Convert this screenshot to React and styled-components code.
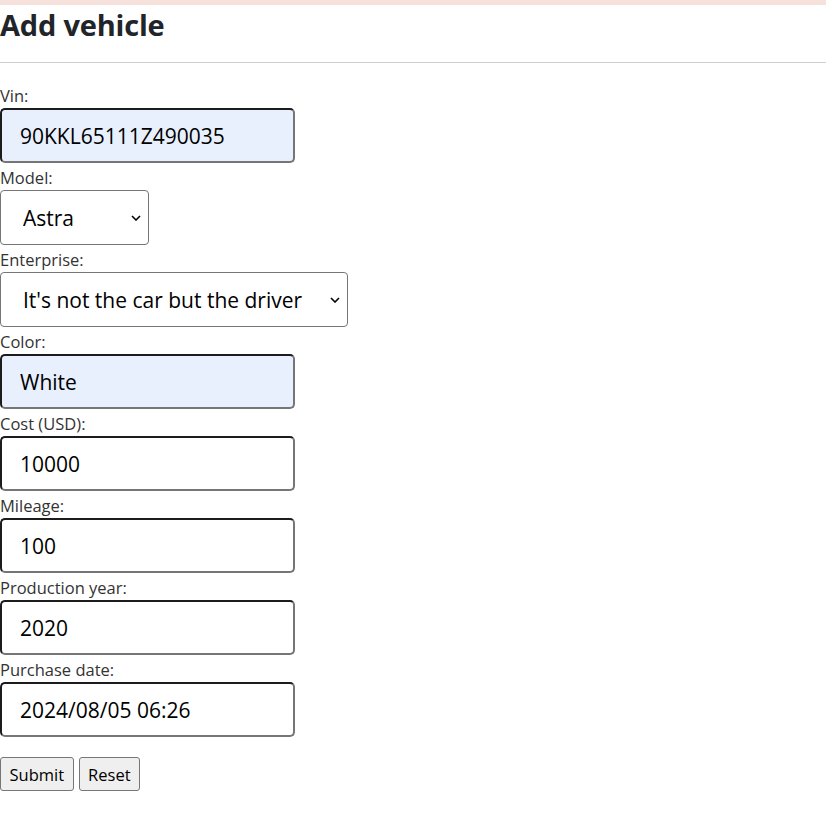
import React from 'react'
import styled, { createGlobalStyle } from 'styled-components'

const GlobalStyle = createGlobalStyle`
  body {
    margin: 0;
    background: #ffffff;
    font-family: "Open Sans", "Noto Sans", sans-serif;
    color: #212529;
  }
`

const TopStrip = styled.div`
  height: 5px;
  background: #f6e1db;
`

const Heading = styled.h1`
  margin: 0;
  height: 52px;
  font-size: 29px;
  font-weight: 700;
  line-height: 40px;
  color: #212529;
  letter-spacing: -0.2px;
`

const Rule = styled.hr`
  margin: 5px 0 18px;
  border: 0;
  border-top: 1px solid #cfcfcf;
`

const Form = styled.form`
  display: flex;
  flex-direction: column;
`

const Field = styled.div`
  display: flex;
  flex-direction: column;
  align-items: flex-start;
`

const Label = styled.label`
  font-size: 16.5px;
  line-height: 24px;
  padding-top: 3px;
  color: #333;
`

const TextInput = styled.input`
  box-sizing: border-box;
  width: 295px;
  height: 55px;
  padding: 0 0 0 18px;
  border: 2px solid;
  border-color: #1c1c1c #767676 #767676 #1c1c1c;
  border-radius: 5px;
  background: ${p => (p.$filled ? '#e8f0fe' : '#ffffff')};
  font-family: "Open Sans", "Noto Sans", sans-serif;
  font-size: 21px;
  color: #000;
  outline: none;
`

const Select = styled.select`
  box-sizing: border-box;
  width: ${p => p.$width}px;
  height: 55px;
  padding: 0 30px 0 22px;
  border: 1px solid #767676;
  border-radius: 4px;
  background: #fff url("data:image/svg+xml;utf8,<svg xmlns='http://www.w3.org/2000/svg' width='10' height='6' viewBox='0 0 10 6'><path d='M1 1l4 4 4-4' fill='none' stroke='%23000' stroke-width='1.6'/></svg>") no-repeat right 7px center;
  appearance: none;
  -webkit-appearance: none;
  font-family: "Open Sans", "Noto Sans", sans-serif;
  font-size: 21px;
  color: #000;
  outline: none;
`

const Buttons = styled.div`
  display: flex;
  gap: 5px;
  margin-top: 20px;
`

const Button = styled.button`
  height: 34px;
  padding: 0 8.5px;
  border: 1px solid #767676;
  border-radius: 3px;
  background: #efefef;
  font-family: "Open Sans", "Noto Sans", sans-serif;
  font-size: 16.5px;
  color: #000;
`

const inputs = [
  { label: 'Color:', value: 'White', filled: true },
  { label: 'Cost (USD):', value: '10000' },
  { label: 'Mileage:', value: '100' },
  { label: 'Production year:', value: '2020' },
  { label: 'Purchase date:', value: '2024/08/05 06:26' },
]

export default function App() {
  return (
    <>
      <GlobalStyle />
      <TopStrip />
      <Heading>Add vehicle</Heading>
      <Rule />
      <Form onSubmit={e => e.preventDefault()}>
        <Field>
          <Label>Vin:</Label>
          <TextInput $filled defaultValue="90KKL65111Z490035" />
        </Field>
        <Field>
          <Label>Model:</Label>
          <Select $width={149} defaultValue="Astra">
            <option>Astra</option>
          </Select>
        </Field>
        <Field>
          <Label>Enterprise:</Label>
          <Select $width={348} defaultValue="x">
            <option value="x">It's not the car but the driver</option>
          </Select>
        </Field>
        {inputs.map(f => (
          <Field key={f.label}>
            <Label>{f.label}</Label>
            <TextInput $filled={f.filled} defaultValue={f.value} />
          </Field>
        ))}
        <Buttons>
          <Button type="submit">Submit</Button>
          <Button type="reset">Reset</Button>
        </Buttons>
      </Form>
    </>
  )
}
